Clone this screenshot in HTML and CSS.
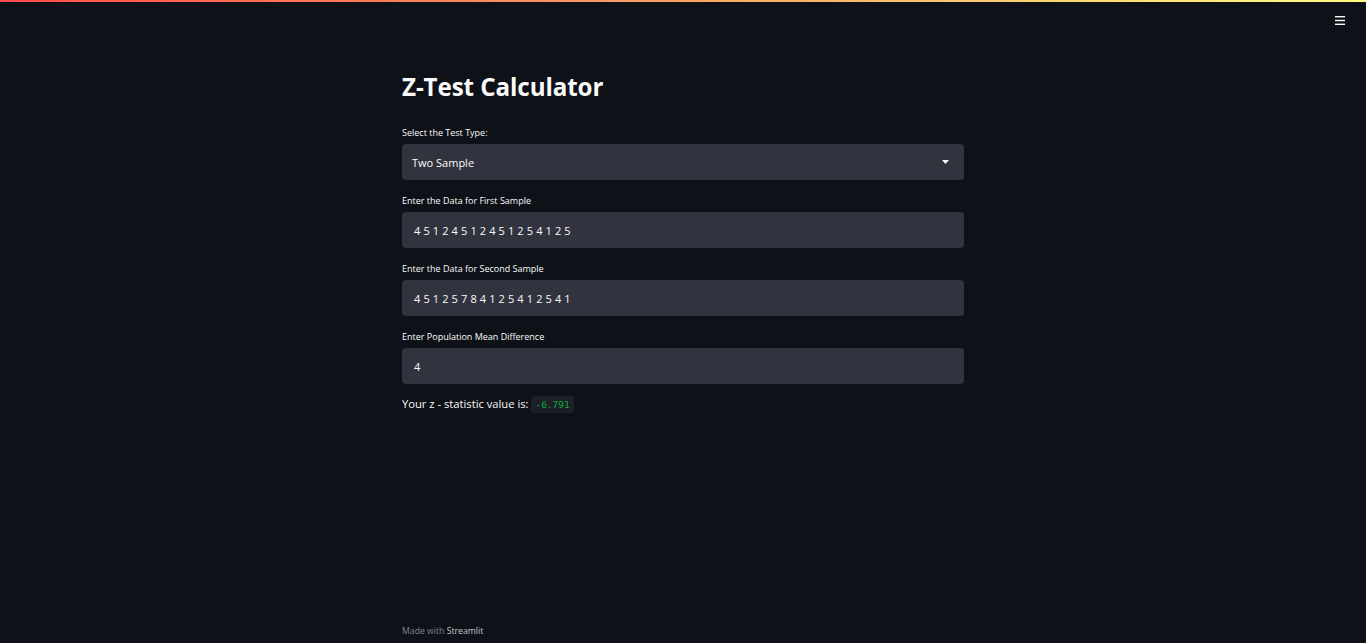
FILE: index.html
```html
<!DOCTYPE html>
<html lang="en">
<head>
<meta charset="utf-8">
<title>Z-Test Calculator</title>
<link rel="stylesheet" href="styles.css">
</head>
<body>
<div class="decoration"></div>
<header class="header">
  <button class="menu" aria-label="Menu">
    <svg width="10" height="9" viewBox="0 0 10 9"><rect x="0" y="0" width="10" height="1.4" fill="#fafafa"/><rect x="0" y="3.8" width="10" height="1.4" fill="#fafafa"/><rect x="0" y="7.6" width="10" height="1.4" fill="#fafafa"/></svg>
  </button>
</header>
<main class="main">
  <div class="block">
    <h1 class="title">Z-Test Calculator</h1>
    <div class="widget">
      <label class="label">Select the Test Type:</label>
      <div class="field select">
        <span>Two Sample</span>
        <svg class="caret" width="7" height="4" viewBox="0 0 7 4"><path d="M0 0 L7 0 L3.5 4 Z" fill="#fafafa"/></svg>
      </div>
    </div>
    <div class="widget">
      <label class="label">Enter the Data for First Sample</label>
      <div class="field input">4 5 1 2 4 5 1 2 4 5 1 2 5 4 1 2 5</div>
    </div>
    <div class="widget">
      <label class="label">Enter the Data for Second Sample</label>
      <div class="field input">4 5 1 2 5 7 8 4 1 2 5 4 1 2 5 4 1</div>
    </div>
    <div class="widget">
      <label class="label">Enter Population Mean Difference</label>
      <div class="field input">4</div>
    </div>
    <p class="result">Your z - statistic value is: <code class="code">-6.791</code></p>
  </div>
</main>
<footer class="footer">Made with <span class="brand">Streamlit</span></footer>
</body>
</html>
```
FILE: styles.css
```css
html, body {
  margin: 0;
  padding: 0;
  height: 100%;
}
body {
  background: #0e1117;
  color: #fafafa;
  font-family: "Open Sans", "Noto Sans", sans-serif;
  display: flex;
  flex-direction: column;
  min-height: 643px;
  position: relative;
  overflow: hidden;
}
.decoration {
  position: absolute;
  top: 0;
  left: 0;
  right: 0;
  height: 2px;
  background: linear-gradient(90deg, #ff4b4b, #fffd80);
}
.header {
  height: 40px;
  display: flex;
  justify-content: flex-end;
  align-items: center;
  padding-right: 21px;
}
.menu {
  background: none;
  border: 0;
  padding: 0;
  width: 10px;
  height: 9px;
  display: flex;
  margin-top: 1px;
}
.main {
  flex: 1;
  display: flex;
  justify-content: center;
}
.block {
  width: 562px;
  display: flex;
  flex-direction: column;
  padding-top: 30px;
}
.title {
  margin: 0 0 22px;
  font-size: 24.2px;
  font-weight: 700;
  line-height: 34px;
  letter-spacing: -0.1px;
}
.widget {
  display: flex;
  flex-direction: column;
  margin-bottom: 14px;
}
.label {
  font-size: 9px;
  line-height: 14px;
  margin-bottom: 4px;
  color: #fafafa;
}
.field {
  height: 36px;
  background: #31333f;
  border-radius: 4px;
  display: flex;
  align-items: center;
  box-sizing: border-box;
  font-size: 11px;
}
.select {
  padding: 0 15px 0 10px;
  justify-content: space-between;
}
.caret {
  display: block;
}
.input {
  padding: 0 12px;
  word-spacing: 0.25px;
  font-weight: 500;
}
.result {
  margin: -2px 0 0;
  font-size: 11.2px;
  line-height: 16px;
}
.code {
  font-family: "DejaVu Sans Mono", "Liberation Mono", monospace;
  font-size: 9.5px;
  color: #09ab3b;
  background: #1c1f27;
  padding: 3px 4px;
  border-radius: 3px;
}
.footer {
  padding: 0 0 6px 402px;
  font-size: 8.7px;
  color: #808495;
}
.brand {
  color: #c5c7cf;
}
```
